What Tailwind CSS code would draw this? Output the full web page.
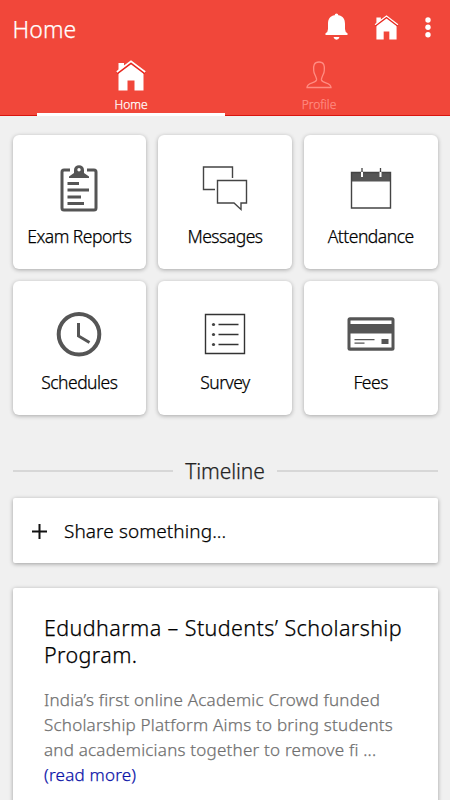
<!DOCTYPE html>
<html lang="en">
<head>
<meta charset="utf-8">
<title>Home</title>
<script src="https://cdn.jsdelivr.net/npm/@tailwindcss/browser@4"></script>
</head>
<body class="h-[800px] overflow-hidden bg-[#f0f0f0] font-['Noto_Sans','Open_Sans',sans-serif] font-light text-black [-webkit-text-stroke:0.25px]">
<svg class="hidden">
  <symbol id="house" viewBox="0 0 30 31">
    <path d="M2.500 13V3H8v3L15 2 27.500 12.500V30.500H18.500V20.500h-7v10h-9z" fill="currentColor"/>
    <path d="M1 13.300 15 2.800 29 13.300" fill="none" stroke="#e8261d" stroke-width="2.600"/>
    <path d="M.8 12 15 1.300 29.200 12" fill="none" stroke="currentColor" stroke-width="1.600"/>
  </symbol>
</svg>
<header class="h-[116px] border-b border-[#d9150f] bg-[#f1473a] text-white whitespace-nowrap">
  <div class="flex h-[58px] items-center pl-[12.500px]">
    <h1 class="flex-1 text-[23px] leading-[30px] font-light tracking-[0.1px]">Home</h1>
    <svg class="mt-[-6px] h-[27px] w-[23px]" viewBox="0 0 23 27" fill="currentColor"><path d="M9.700 2.300Q9.700.5 11.500.5t1.800 1.800C18 3 20 6 20 11v5q0 3 2.500 4.200V22H.5v-1.800Q3 19 3 16v-5c0-5 2-8 6.700-8.700zM8.500 24h6q-.7 2.700-3 2.700t-3-2.700z"/></svg>
    <svg class="mt-[-4px] ml-[26px] h-[25px] w-[25px]"><use href="#house"/></svg>
    <svg class="mt-[-4px] mr-[19.500px] ml-[26px] h-[21px] w-[6px]" viewBox="0 0 6 21" fill="currentColor"><circle cx="3" cy="3" r="2.700"/><circle cx="3" cy="10.300" r="2.700"/><circle cx="3" cy="17.700" r="2.700"/></svg>
  </div>
  <nav class="flex h-[58px] px-[37px]">
    <div class="flex w-[188px] flex-col items-center border-b-[3px] border-white pt-[2px]">
      <svg class="h-[31px] w-[30px]"><use href="#house"/></svg>
      <span class="mt-[5px] text-[12px] leading-[17px]">Home</span>
    </div>
    <div class="flex w-[188px] flex-col items-center pt-[2px] text-[#ff8c82]">
      <svg class="mt-px h-[30px] w-[26px]" viewBox="0 0 26 30" fill="none" stroke="currentColor" stroke-width="1.300"><path d="M1 26.500c0-5 8.500-4 9.500-7.500.3-1.500-.4-2.600-1-4-.9-2-1.800-3.500-1.800-5.500C7.300 4.500 8 1 13 1s5.700 3.500 5.300 8.500c0 2-.9 3.500-1.800 5.500-.6 1.400-1.300 2.500-1 4 1 3.500 9.500 2.500 9.500 7.500z"/></svg>
      <span class="mt-[5px] text-[12px] leading-[17px]">Profile</span>
    </div>
  </nav>
</header>
<main class="px-[12.500px] pt-[19px] whitespace-nowrap">
  <section class="grid grid-cols-3 gap-x-[12px] gap-y-[12.500px] text-[17.500px] leading-[26px] tracking-[-0.5px]">
    <div class="flex h-[133.500px] flex-col items-center rounded-[6px] bg-white pt-[28px] shadow-[0_1px_4px_rgba(0,0,0,0.3)]">
      <svg class="h-[52px] w-[52px]" viewBox="0 0 52 52" fill="#555"><path d="M17 7h-6a2 2 0 0 0-2 2v36a2 2 0 0 0 2 2h30a2 2 0 0 0 2-2V9a2 2 0 0 0-2-2H34" fill="none" stroke="#555" stroke-width="3"/><path fill-rule="evenodd" d="M16 15v-1.500l5-3.500V7a5 4.800 0 0 1 10 0v3l5 3.500V15zm10-10a1.700 1.700 0 1 0 0 3.400 1.700 1.700 0 0 0 0-3.400z"/><path d="M14.500 19h11.500v3h-11.500zM14.500 25.500h21.500v3h-21.500zM14.500 32.500h13.500v3h-13.500zM14.500 39h16.500v3h-16.500z"/></svg>
      <span class="mt-[8px]">Exam Reports</span>
    </div>
    <div class="flex h-[133.500px] flex-col items-center rounded-[6px] bg-white pt-[28px] shadow-[0_1px_4px_rgba(0,0,0,0.3)]">
      <svg class="h-[52px] w-[52px]" viewBox="0 0 52 52" fill="none" stroke="#444" stroke-width="1.400"><path d="M33.500 15V4h-29v22.500h11.500"/><path d="M18.500 17.500h29V40h-5.500v6.500l-7-6.500h-16.500z"/></svg>
      <span class="mt-[8px]">Messages</span>
    </div>
    <div class="flex h-[133.500px] flex-col items-center rounded-[6px] bg-white pt-[28px] shadow-[0_1px_4px_rgba(0,0,0,0.3)]">
      <svg class="h-[52px] w-[52px]" viewBox="0 0 52 52" fill="none" stroke="#444"><path d="M6 9h40v9.500H6z" fill="#555" stroke="none"/><path d="M6.500 9.500h39v35.500h-39z" stroke-width="1.400"/><path d="M17 5v4M35.500 5v4" stroke-width="1.300"/><path d="M17 9v5M35.500 9v5" stroke="#fff" stroke-width="2"/></svg>
      <span class="mt-[8px]">Attendance</span>
    </div>
    <div class="flex h-[133.500px] flex-col items-center rounded-[6px] bg-white pt-[28px] shadow-[0_1px_4px_rgba(0,0,0,0.3)]">
      <svg class="h-[52px] w-[52px]" viewBox="0 0 52 52" fill="none" stroke="#555"><circle cx="26" cy="25.300" r="20.300" stroke-width="4"/><path d="M25.500 14v13l11 6.500" stroke-width="3"/></svg>
      <span class="mt-[8px]">Schedules</span>
    </div>
    <div class="flex h-[133.500px] flex-col items-center rounded-[6px] bg-white pt-[28px] shadow-[0_1px_4px_rgba(0,0,0,0.3)]">
      <svg class="h-[52px] w-[52px]" viewBox="0 0 52 52" fill="none" stroke="#333"><path d="M6.500 5.500h39v39h-39z" stroke-width="1.400"/><path d="M19.500 15.500h20M19.500 25.500h20M19.500 35.500h20" stroke-width="1.300"/><g fill="#444" stroke="none"><circle cx="14.500" cy="15.500" r="1.600"/><circle cx="14.500" cy="25.500" r="1.600"/><circle cx="14.500" cy="35.500" r="1.600"/></g></svg>
      <span class="mt-[8px]">Survey</span>
    </div>
    <div class="flex h-[133.500px] flex-col items-center rounded-[6px] bg-white pt-[28px] shadow-[0_1px_4px_rgba(0,0,0,0.3)]">
      <svg class="h-[52px] w-[52px]" viewBox="0 0 52 52" fill="#555"><rect x="2.500" y="8.300" width="47" height="33.500" rx="2.500"/><path d="M5.500 11.500h41V15h-41zM5.500 24.500h41v14h-41z" fill="#fff"/><path d="M9.500 30h20v1.300h-20zM9.500 33.500h10v1.300h-10zM36.500 30h7v5h-7z"/></svg>
      <span class="mt-[8px]">Fees</span>
    </div>
  </section>
  <div class="mt-[41px] flex h-[30px] items-center text-[#222]">
    <div class="h-[2px] flex-1 bg-[#d7d7d7]"></div>
    <h2 class="w-[104px] text-center text-[21px] leading-[30px] tracking-[-0.1px]">Timeline</h2>
    <div class="h-[2px] flex-1 bg-[#d7d7d7]"></div>
  </div>
  <div class="mt-[12px] flex h-[65px] items-center rounded-[2px] bg-white pt-[2px] pl-[19.500px] shadow-[0_1px_4px_rgba(0,0,0,0.35)]">
    <svg class="h-[15px] w-[15px]" viewBox="0 0 15 15"><path d="M7.500 0v15M0 7.500h15" stroke="#111" stroke-width="2"/></svg>
    <span class="ml-[17px] text-[19px] leading-[28px] tracking-[0.08px]">Share something...</span>
  </div>
  <article class="mt-[25px] h-[240px] rounded-[2px] bg-white pt-[26px] pl-[31.500px] shadow-[0_1px_4px_rgba(0,0,0,0.35)]">
    <h3 class="text-[21.500px] leading-[27.500px] tracking-[0.4px]">Edudharma – Students’ Scholarship<br>Program.</h3>
    <p class="mt-[18px] text-[17px] leading-[25px] tracking-[0.22px] text-[#707070]">India’s first online Academic Crowd funded<br>Scholarship Platform Aims to bring students<br>and academicians together to remove fi ...<br><a class="text-[#0a12a8]">(read more)</a></p>
  </article>
</main>
</body>
</html>
